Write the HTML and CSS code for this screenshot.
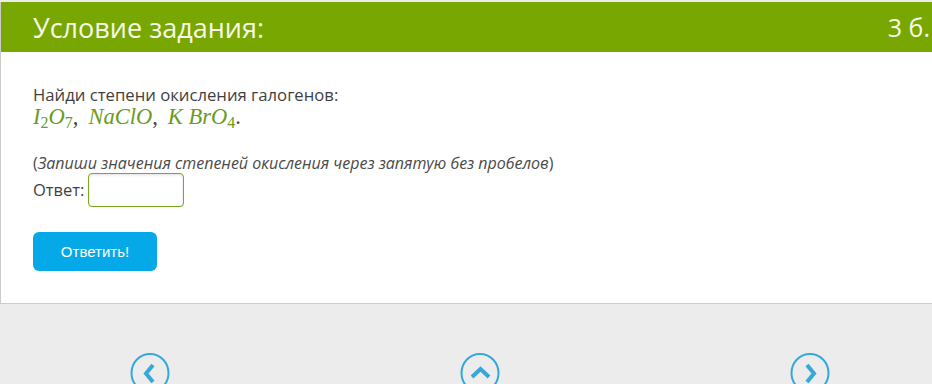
FILE: index.html
```html
<!DOCTYPE html>
<html lang="ru">
<head>
    <meta charset="UTF-8">
    <title>Условие задания</title>
    <link rel="stylesheet" href="styles.css">
</head>
<body>
    <!-- Task card -->
    <div class="task">
        <div class="task-head">
            <h2 class="task-title">Условие задания:</h2>
            <div class="task-points">3 б.</div>
        </div>
        <div class="task-body">
            <p class="question">Найди степени окисления галогенов:</p>
            <p class="formula"><i>I</i><sub>2</sub><i>O</i><sub>7</sub><span class="punct">,</span><i>NaClO</i><span class="punct">,</span><i>K BrO</i><sub>4</sub><span class="dot">.</span></p>
            <p class="hint">(<i>Запиши значения степеней окисления через запятую без пробелов</i>)</p>
            <div class="answer">
                <label for="answer">Ответ:</label>
                <input type="text" id="answer" class="answer-input">
            </div>
            <button class="submit">Ответить!</button>
        </div>
    </div>

    <!-- Navigation -->
    <nav class="pager">
        <a href="#" class="pager-btn">
            <svg viewBox="0 0 40 40" width="40" height="40"><ellipse cx="20" cy="20" rx="18.5" ry="19" fill="none" stroke="#35a8d8" stroke-width="2"/><path d="M23 12 L16 20.5 L23 29" fill="none" stroke="#35a8d8" stroke-width="4" stroke-linejoin="miter"/></svg>
        </a>
        <a href="#" class="pager-btn">
            <svg viewBox="0 0 40 40" width="40" height="40"><ellipse cx="20" cy="20" rx="18.5" ry="19" fill="none" stroke="#35a8d8" stroke-width="2"/><path d="M12 24 L20.5 16 L29 24" fill="none" stroke="#35a8d8" stroke-width="4" stroke-linejoin="miter"/></svg>
        </a>
        <a href="#" class="pager-btn">
            <svg viewBox="0 0 40 40" width="40" height="40"><ellipse cx="20" cy="20" rx="18.5" ry="19" fill="none" stroke="#35a8d8" stroke-width="2"/><path d="M17 12 L24 20.5 L17 29" fill="none" stroke="#35a8d8" stroke-width="4" stroke-linejoin="miter"/></svg>
        </a>
    </nav>
</body>
</html>
```

FILE: styles.css
```css
* {
    margin: 0;
    padding: 0;
    box-sizing: border-box;
}

body {
    font-family: 'Open Sans', 'Noto Sans', sans-serif;
    background: #ececec;
    color: #3f3f3f;
    padding-top: 2px;
    overflow: hidden;
    height: 384px;
}

/* Task card */
.task {
    background: #ffffff;
    border-left: 1px solid #cccccc;
    border-bottom: 1px solid #cccccc;
}

.task-head {
    display: flex;
    justify-content: space-between;
    align-items: center;
    height: 50px;
    padding: 0 2px 0 32px;
    background: #77a700;
    color: #f8f8ea;
}

.task-title {
    font-size: 27px;
    font-weight: 400;
}

.task-points {
    font-size: 25px;
}

.task-body {
    padding: 32px 32px 32px;
    font-size: 16px;
    line-height: 22px;
}

.question {
    font-size: 16.7px;
}

.formula {
    font-family: 'Liberation Serif', 'DejaVu Serif', serif;
    font-size: 22.5px;
    line-height: 22px;
    color: #6b9a1c;
    margin-bottom: 24px;
}

.formula sub {
    font-size: 16px;
    vertical-align: -4px;
    line-height: 0;
}

.formula .punct {
    color: #444444;
    margin-right: 10px;
}

.formula .dot {
    color: #444444;
}

.hint {
    color: #4a4a4a;
}

.answer {
    display: flex;
    align-items: center;
    gap: 4px;
    margin-top: -1px;
    font-size: 16.5px;
}

.answer-input {
    width: 96px;
    height: 34px;
    border: 1px solid #7aa81e;
    border-radius: 4px;
    box-shadow: inset 0 1px 3px rgba(0, 0, 0, 0.12);
    background: #ffffff;
}

.submit {
    margin-top: 25px;
    width: 124px;
    height: 39px;
    border: none;
    border-radius: 6px;
    background: #06a9e8;
    color: #ffffff;
    font-family: 'Liberation Sans', Arial, sans-serif;
    font-size: 15px;
    cursor: pointer;
}

/* Navigation */
.pager {
    display: flex;
    gap: 290px;
    padding: 49px 0 0 130px;
}

.pager-btn {
    display: block;
    width: 40px;
    height: 40px;
}
```
